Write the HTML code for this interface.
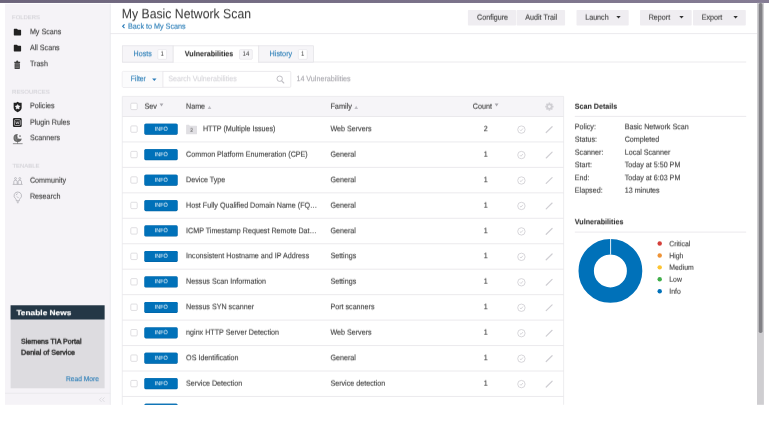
<!DOCTYPE html>
<html><head><meta charset="utf-8"><title>My Basic Network Scan</title>
<style>
html,body{margin:0;padding:0;background:#fff;overflow:hidden;width:769px;height:429px}
svg{display:block;font-family:"Liberation Sans",sans-serif;text-rendering:geometricPrecision}
.t{position:absolute;left:0;top:0;will-change:transform;transform-origin:0 0}
#pg{position:relative;width:769px;height:429px;overflow:hidden;background:#fff}
</style></head><body>
<div id="pg">
<svg width="769" height="429" viewBox="0 0 769 429">
<rect x="0.00" y="0.00" width="769.00" height="429.00" fill="#ffffff"/>
<defs><linearGradient id="tb" x1="0" y1="0" x2="1" y2="0"><stop offset="0" stop-color="#6c647b"/><stop offset="1" stop-color="#857c94"/></linearGradient></defs>
<rect x="0.00" y="0.00" width="769.00" height="2.90" fill="url(#tb)"/>
<rect x="0.00" y="2.00" width="769.00" height="0.90" fill="#2a2040" opacity=".13"/>
<rect x="5.00" y="3.80" width="105.60" height="401.00" fill="#f5f3f7"/>
<line x1="110.30" y1="3.80" x2="110.30" y2="404.80" stroke="#eae8ed" stroke-width="0.8"/>
<path d="M13.8 30.30 v-.9 q0-.6 .6-.6 h2.3 q.4 0 .6 .3 l.5 .7 h2.7 q.6 0 .6 .6 v4.4 q0 .6-.6 .6 h-6.1 q-.6 0-.6-.6z" fill="#222"/>
<path d="M13.8 46.30 v-.9 q0-.6 .6-.6 h2.3 q.4 0 .6 .3 l.5 .7 h2.7 q.6 0 .6 .6 v4.4 q0 .6-.6 .6 h-6.1 q-.6 0-.6-.6z" fill="#222"/>
<path d="M14.3 61.7 h1.8 q0-1.3 1.1-1.3 q1.1 0 1.1 1.3 h1.8 v1.2 h-5.8z M14.6 63.3 h5.2 v5.1 q0 .7-.7 .7 h-3.8 q-.7 0-.7-.7z" fill="#3d3d3d"/>
<path d="M15.3 64.8 h3.8 M15.3 66.2 h3.8 M15.3 67.6 h3.8" stroke="#f4f3f6" stroke-width=".4" opacity=".75"/>
<path d="M17.65 101.8 l1.5 1 h2.5 v4.9 q0 2.6-4 4.6 q-4-2-4-4.6 v-4.9 h2.5z" fill="#222"/>
<polygon points="17.65,104.50 18.50,105.83 20.03,106.23 19.03,107.45 19.12,109.02 17.65,108.45 16.18,109.02 16.27,107.45 15.27,106.23 16.80,105.83" fill="#f4f3f6" stroke="#f4f3f6" stroke-width=".5" stroke-linejoin="round"/>
<rect x="12.95" y="118.10" width="8.75" height="9.00" fill="#222" rx="1.3"/>
<rect x="14.4" y="119.7" width="5.9" height="5.8" rx=".9" stroke="#f4f3f6" stroke-width=".6" fill="none"/><path d="M15.7 121.3 l.8 2.7 .85-2.3 .85 2.3 .8-2.7" stroke="#f4f3f6" stroke-width=".55" fill="none"/>
<mask id="dm"><rect x="10" y="130" width="16" height="16" fill="#fff"/><circle cx="20.2" cy="135.9" r="2.9" fill="#000"/></mask><circle cx="17.6" cy="138.0" r="4.1" fill="#666" mask="url(#dm)"/><circle cx="20.0" cy="136.0" r=".85" fill="#666"/><path d="M17.6 141.8 v1.9 M12.9 143.7 h9.7" stroke="#666" stroke-width=".7"/><path d="M15.2 136.2 q-.6 2.6 1.6 4.4 M17 139 l1.6-1.6" stroke="#f4f3f6" stroke-width=".4" fill="none" opacity=".7"/>
<path d="M12.7 184.4 h9.9 M13.8 184.2 v-2.5 q0-1.5 1.7-1.5 q1.7 0 1.7 1.5 v2.5 M18.1 184.2 v-2.5 q0-1.5 1.7-1.5 q1.7 0 1.7 1.5 v2.5" stroke="#9b9aa1" stroke-width=".6" fill="none"/><circle cx="15.5" cy="178.5" r=".95" stroke="#9b9aa1" stroke-width=".55" fill="none"/><circle cx="19.8" cy="178.5" r=".95" stroke="#9b9aa1" stroke-width=".55" fill="none"/>
<path d="M17.8 192.0 a3.7 3.7 0 0 1 2.2 6.7 q-.6 .6-.6 1.5 v.5 h-3.2 v-.5 q0-.9-.6-1.5 a3.7 3.7 0 0 1 2.2-6.7z M16.7 201.9 h2.2 M17.2 202.8 h1.2 M16.1 195.2 q.3-1.3 1.6-1.5 M17 196.5 l1.6 1.6" stroke="#9b9aa1" stroke-width=".6" fill="none"/>
<rect x="10.60" y="305.30" width="94.00" height="83.00" fill="#dddce0"/>
<rect x="10.60" y="305.30" width="94.00" height="14.20" fill="#243746"/>
<line x1="5.00" y1="393.30" x2="110.20" y2="393.30" stroke="#e6e5e9" stroke-width="0.7"/>
<path d="M101.6 397.5 l-2.1 2.2 2.1 2.2 M104.5 397.5 l-2.1 2.2 2.1 2.2" stroke="#cfced3" stroke-width=".6" fill="none"/>
<path d="M124.5 24.4 l-1.8 1.9 1.8 1.9" stroke="#2b7cb8" stroke-width="1.2" fill="none"/>
<line x1="110.20" y1="33.60" x2="757.00" y2="33.60" stroke="#e6e5e8" stroke-width="0.8"/>
<rect x="467.90" y="9.90" width="48.20" height="15.70" fill="#efedf1" rx="0.8"/>
<rect x="516.60" y="9.90" width="48.50" height="15.70" fill="#efedf1" rx="0.8"/>
<rect x="576.50" y="9.90" width="52.20" height="15.70" fill="#efedf1" rx="0.8"/>
<path d="M616.30 16.1 h4.4 l-2.2 2.5z" fill="#333"/>
<rect x="640.00" y="9.90" width="51.70" height="15.70" fill="#efedf1" rx="0.8"/>
<path d="M679.30 16.1 h4.4 l-2.2 2.5z" fill="#333"/>
<rect x="693.00" y="9.90" width="52.80" height="15.70" fill="#efedf1" rx="0.8"/>
<path d="M733.40 16.1 h4.4 l-2.2 2.5z" fill="#333"/>
<line x1="122.20" y1="62.00" x2="746.20" y2="62.00" stroke="#e6e5e8" stroke-width="0.8"/>
<rect x="122.30" y="45.80" width="50.90" height="16.30" fill="#f6f5f8" stroke="#e2e1e5" stroke-width="0.7"/>
<rect x="258.60" y="45.80" width="54.80" height="16.30" fill="#f6f5f8" stroke="#e2e1e5" stroke-width="0.7"/>
<path d="M173.2 62.6 V45.8 H258.6 V62.6" fill="#fff" stroke="#e2e1e5" stroke-width=".7"/>
<rect x="157.80" y="49.60" width="8.80" height="9.70" fill="#fff" rx="1" stroke="#e2e1e5" stroke-width="0.6"/>
<rect x="239.50" y="49.60" width="12.80" height="9.70" fill="#f6f5f8" rx="1" stroke="#e2e1e5" stroke-width="0.6"/>
<rect x="298.40" y="49.60" width="8.80" height="9.70" fill="#fff" rx="1" stroke="#e2e1e5" stroke-width="0.6"/>
<rect x="122.30" y="71.40" width="168.50" height="15.90" fill="#fff" rx="1" stroke="#e2e1e5" stroke-width="0.7"/>
<rect x="122.60" y="71.70" width="40.20" height="15.30" fill="#fbfbfc"/>
<line x1="162.90" y1="71.40" x2="162.90" y2="87.30" stroke="#e2e1e5" stroke-width="0.7"/>
<path d="M152.1 78.6 h4.4 l-2.2 2.4z" fill="#2b7cb8"/>
<circle cx="279.7" cy="78.7" r="2.7" stroke="#bfbec4" stroke-width="1" fill="none"/><path d="M281.7 80.8 l2.1 2.2" stroke="#bfbec4" stroke-width="1.1" stroke-linecap="round"/>
<rect x="122.30" y="96.40" width="441.30" height="20.10" fill="#f6f5f8"/>
<path d="M122.3 404.8 V96.4 H563.6 V404.8" fill="none" stroke="#e6e5e9" stroke-width=".7"/>
<rect x="130.80" y="103.20" width="6.40" height="6.40" fill="#fff" rx="1" stroke="#d2d1d6" stroke-width="0.7"/>
<path d="M159.6 103.5 h3.8 l-1.9 3.1z" fill="#a9a8ae"/>
<path d="M207.7 108.9 h3.6 l-1.8-3.1z" fill="#bdbcc2"/>
<path d="M354.4 108.9 h3.6 l-1.8-3.1z" fill="#bdbcc2"/>
<path d="M494.7 103.5 h3.8 l-1.9 3.1z" fill="#a9a8ae"/>
<g stroke="#cfced3" fill="none"><circle cx="549.4" cy="106.6" r="2.3" stroke-width="1.7"/><line x1="552.00" y1="106.60" x2="553.50" y2="106.60" stroke-width="1.6"/><line x1="551.24" y1="108.44" x2="552.30" y2="109.50" stroke-width="1.6"/><line x1="549.40" y1="109.20" x2="549.40" y2="110.70" stroke-width="1.6"/><line x1="547.56" y1="108.44" x2="546.50" y2="109.50" stroke-width="1.6"/><line x1="546.80" y1="106.60" x2="545.30" y2="106.60" stroke-width="1.6"/><line x1="547.56" y1="104.76" x2="546.50" y2="103.70" stroke-width="1.6"/><line x1="549.40" y1="104.00" x2="549.40" y2="102.50" stroke-width="1.6"/><line x1="551.24" y1="104.76" x2="552.30" y2="103.70" stroke-width="1.6"/></g>
<clipPath id="cl"><rect x="0" y="0" width="757" height="404.8"/></clipPath><g clip-path="url(#cl)">
<line x1="122.30" y1="116.50" x2="563.60" y2="116.50" stroke="#e6e5e9" stroke-width="0.8"/>
<rect x="130.80" y="125.90" width="6.40" height="6.40" fill="#fff" rx="1" stroke="#d2d1d6" stroke-width="0.7"/>
<rect x="144.50" y="123.80" width="33.00" height="11.00" fill="#005f9f" rx="1.3"/>
<rect x="144.50" y="123.80" width="33.00" height="10.50" fill="#0071b9" rx="1.3"/>
<path d="M186.1 125.70 v-.5 q0-.4 .4-.4 h2.6 l.6 .9z M186.1 125.80 h10.4 q.5 0 .5 .5 v7.5 q0 .5-.5 .5 h-9.9 q-.5 0-.5-.5z" fill="#e0dfe3"/>
<circle cx="521.4" cy="129.60" r="3.7" stroke="#cbcacf" stroke-width=".75" fill="none"/><path d="M519.9 129.70 l1.1 1.1 1.9-2.3" stroke="#cbcacf" stroke-width=".75" fill="none"/>
<path d="M546.2 132.50 L552.1 126.70" stroke="#cfced3" stroke-width="1.2" stroke-linecap="round"/>
<line x1="122.30" y1="141.95" x2="563.60" y2="141.95" stroke="#e6e5e9" stroke-width="0.8"/>
<rect x="130.80" y="151.35" width="6.40" height="6.40" fill="#fff" rx="1" stroke="#d2d1d6" stroke-width="0.7"/>
<rect x="144.50" y="149.25" width="33.00" height="11.00" fill="#005f9f" rx="1.3"/>
<rect x="144.50" y="149.25" width="33.00" height="10.50" fill="#0071b9" rx="1.3"/>
<circle cx="521.4" cy="155.05" r="3.7" stroke="#cbcacf" stroke-width=".75" fill="none"/><path d="M519.9 155.15 l1.1 1.1 1.9-2.3" stroke="#cbcacf" stroke-width=".75" fill="none"/>
<path d="M546.2 157.95 L552.1 152.15" stroke="#cfced3" stroke-width="1.2" stroke-linecap="round"/>
<line x1="122.30" y1="167.40" x2="563.60" y2="167.40" stroke="#e6e5e9" stroke-width="0.8"/>
<rect x="130.80" y="176.80" width="6.40" height="6.40" fill="#fff" rx="1" stroke="#d2d1d6" stroke-width="0.7"/>
<rect x="144.50" y="174.70" width="33.00" height="11.00" fill="#005f9f" rx="1.3"/>
<rect x="144.50" y="174.70" width="33.00" height="10.50" fill="#0071b9" rx="1.3"/>
<circle cx="521.4" cy="180.50" r="3.7" stroke="#cbcacf" stroke-width=".75" fill="none"/><path d="M519.9 180.60 l1.1 1.1 1.9-2.3" stroke="#cbcacf" stroke-width=".75" fill="none"/>
<path d="M546.2 183.40 L552.1 177.60" stroke="#cfced3" stroke-width="1.2" stroke-linecap="round"/>
<line x1="122.30" y1="192.85" x2="563.60" y2="192.85" stroke="#e6e5e9" stroke-width="0.8"/>
<rect x="130.80" y="202.25" width="6.40" height="6.40" fill="#fff" rx="1" stroke="#d2d1d6" stroke-width="0.7"/>
<rect x="144.50" y="200.15" width="33.00" height="11.00" fill="#005f9f" rx="1.3"/>
<rect x="144.50" y="200.15" width="33.00" height="10.50" fill="#0071b9" rx="1.3"/>
<circle cx="521.4" cy="205.95" r="3.7" stroke="#cbcacf" stroke-width=".75" fill="none"/><path d="M519.9 206.05 l1.1 1.1 1.9-2.3" stroke="#cbcacf" stroke-width=".75" fill="none"/>
<path d="M546.2 208.85 L552.1 203.05" stroke="#cfced3" stroke-width="1.2" stroke-linecap="round"/>
<line x1="122.30" y1="218.30" x2="563.60" y2="218.30" stroke="#e6e5e9" stroke-width="0.8"/>
<rect x="130.80" y="227.70" width="6.40" height="6.40" fill="#fff" rx="1" stroke="#d2d1d6" stroke-width="0.7"/>
<rect x="144.50" y="225.60" width="33.00" height="11.00" fill="#005f9f" rx="1.3"/>
<rect x="144.50" y="225.60" width="33.00" height="10.50" fill="#0071b9" rx="1.3"/>
<circle cx="521.4" cy="231.40" r="3.7" stroke="#cbcacf" stroke-width=".75" fill="none"/><path d="M519.9 231.50 l1.1 1.1 1.9-2.3" stroke="#cbcacf" stroke-width=".75" fill="none"/>
<path d="M546.2 234.30 L552.1 228.50" stroke="#cfced3" stroke-width="1.2" stroke-linecap="round"/>
<line x1="122.30" y1="243.75" x2="563.60" y2="243.75" stroke="#e6e5e9" stroke-width="0.8"/>
<rect x="130.80" y="253.15" width="6.40" height="6.40" fill="#fff" rx="1" stroke="#d2d1d6" stroke-width="0.7"/>
<rect x="144.50" y="251.05" width="33.00" height="11.00" fill="#005f9f" rx="1.3"/>
<rect x="144.50" y="251.05" width="33.00" height="10.50" fill="#0071b9" rx="1.3"/>
<circle cx="521.4" cy="256.85" r="3.7" stroke="#cbcacf" stroke-width=".75" fill="none"/><path d="M519.9 256.95 l1.1 1.1 1.9-2.3" stroke="#cbcacf" stroke-width=".75" fill="none"/>
<path d="M546.2 259.75 L552.1 253.95" stroke="#cfced3" stroke-width="1.2" stroke-linecap="round"/>
<line x1="122.30" y1="269.20" x2="563.60" y2="269.20" stroke="#e6e5e9" stroke-width="0.8"/>
<rect x="130.80" y="278.60" width="6.40" height="6.40" fill="#fff" rx="1" stroke="#d2d1d6" stroke-width="0.7"/>
<rect x="144.50" y="276.50" width="33.00" height="11.00" fill="#005f9f" rx="1.3"/>
<rect x="144.50" y="276.50" width="33.00" height="10.50" fill="#0071b9" rx="1.3"/>
<circle cx="521.4" cy="282.30" r="3.7" stroke="#cbcacf" stroke-width=".75" fill="none"/><path d="M519.9 282.40 l1.1 1.1 1.9-2.3" stroke="#cbcacf" stroke-width=".75" fill="none"/>
<path d="M546.2 285.20 L552.1 279.40" stroke="#cfced3" stroke-width="1.2" stroke-linecap="round"/>
<line x1="122.30" y1="294.65" x2="563.60" y2="294.65" stroke="#e6e5e9" stroke-width="0.8"/>
<rect x="130.80" y="304.05" width="6.40" height="6.40" fill="#fff" rx="1" stroke="#d2d1d6" stroke-width="0.7"/>
<rect x="144.50" y="301.95" width="33.00" height="11.00" fill="#005f9f" rx="1.3"/>
<rect x="144.50" y="301.95" width="33.00" height="10.50" fill="#0071b9" rx="1.3"/>
<circle cx="521.4" cy="307.75" r="3.7" stroke="#cbcacf" stroke-width=".75" fill="none"/><path d="M519.9 307.85 l1.1 1.1 1.9-2.3" stroke="#cbcacf" stroke-width=".75" fill="none"/>
<path d="M546.2 310.65 L552.1 304.85" stroke="#cfced3" stroke-width="1.2" stroke-linecap="round"/>
<line x1="122.30" y1="320.10" x2="563.60" y2="320.10" stroke="#e6e5e9" stroke-width="0.8"/>
<rect x="130.80" y="329.50" width="6.40" height="6.40" fill="#fff" rx="1" stroke="#d2d1d6" stroke-width="0.7"/>
<rect x="144.50" y="327.40" width="33.00" height="11.00" fill="#005f9f" rx="1.3"/>
<rect x="144.50" y="327.40" width="33.00" height="10.50" fill="#0071b9" rx="1.3"/>
<circle cx="521.4" cy="333.20" r="3.7" stroke="#cbcacf" stroke-width=".75" fill="none"/><path d="M519.9 333.30 l1.1 1.1 1.9-2.3" stroke="#cbcacf" stroke-width=".75" fill="none"/>
<path d="M546.2 336.10 L552.1 330.30" stroke="#cfced3" stroke-width="1.2" stroke-linecap="round"/>
<line x1="122.30" y1="345.55" x2="563.60" y2="345.55" stroke="#e6e5e9" stroke-width="0.8"/>
<rect x="130.80" y="354.95" width="6.40" height="6.40" fill="#fff" rx="1" stroke="#d2d1d6" stroke-width="0.7"/>
<rect x="144.50" y="352.85" width="33.00" height="11.00" fill="#005f9f" rx="1.3"/>
<rect x="144.50" y="352.85" width="33.00" height="10.50" fill="#0071b9" rx="1.3"/>
<circle cx="521.4" cy="358.65" r="3.7" stroke="#cbcacf" stroke-width=".75" fill="none"/><path d="M519.9 358.75 l1.1 1.1 1.9-2.3" stroke="#cbcacf" stroke-width=".75" fill="none"/>
<path d="M546.2 361.55 L552.1 355.75" stroke="#cfced3" stroke-width="1.2" stroke-linecap="round"/>
<line x1="122.30" y1="371.00" x2="563.60" y2="371.00" stroke="#e6e5e9" stroke-width="0.8"/>
<rect x="130.80" y="380.40" width="6.40" height="6.40" fill="#fff" rx="1" stroke="#d2d1d6" stroke-width="0.7"/>
<rect x="144.50" y="378.30" width="33.00" height="11.00" fill="#005f9f" rx="1.3"/>
<rect x="144.50" y="378.30" width="33.00" height="10.50" fill="#0071b9" rx="1.3"/>
<circle cx="521.4" cy="384.10" r="3.7" stroke="#cbcacf" stroke-width=".75" fill="none"/><path d="M519.9 384.20 l1.1 1.1 1.9-2.3" stroke="#cbcacf" stroke-width=".75" fill="none"/>
<path d="M546.2 387.00 L552.1 381.20" stroke="#cfced3" stroke-width="1.2" stroke-linecap="round"/>
<line x1="122.30" y1="396.45" x2="563.60" y2="396.45" stroke="#e6e5e9" stroke-width="0.8"/>
<rect x="144.50" y="403.75" width="33.00" height="11.00" fill="#005f9f" rx="1.3"/>
<rect x="144.50" y="403.75" width="33.00" height="10.50" fill="#0071b9" rx="1.3"/>
</g>
<line x1="574.80" y1="116.40" x2="746.20" y2="116.40" stroke="#e6e5e8" stroke-width="0.8"/>
<line x1="574.80" y1="232.10" x2="746.20" y2="232.10" stroke="#e6e5e8" stroke-width="0.8"/>
<circle cx="610.4" cy="270.9" r="24.2" fill="none" stroke="#0071b9" stroke-width="15.4"/>
<line x1="610.60" y1="238.60" x2="610.60" y2="254.60" stroke="#fff" stroke-width="0.9"/>
<circle cx="659.7" cy="243.50" r="2.2" fill="#d43f3a"/>
<circle cx="659.7" cy="255.43" r="2.2" fill="#ee9336"/>
<circle cx="659.7" cy="267.36" r="2.2" fill="#fdc431"/>
<circle cx="659.7" cy="279.29" r="2.2" fill="#3fae49"/>
<circle cx="659.7" cy="291.22" r="2.2" fill="#0071b9"/>
<rect x="757.00" y="2.90" width="6.90" height="401.90" fill="#cfced1"/>
<rect x="758.70" y="2.90" width="3.80" height="330.20" fill="#828186" rx="1.8"/>
</svg>
<svg class="t" style="transform:translateY(.25px) rotate(.004deg)" width="769" height="429" viewBox="0 0 769 429">
<text x="12.10" y="19.00" font-size="5.8" fill="#d3d2d7" textLength="27.80" lengthAdjust="spacingAndGlyphs" stroke="#d3d2d7" stroke-width="0.12">FOLDERS</text>
<text x="29.90" y="34.00" font-size="7.8" fill="#3e3e3e" textLength="31.40" lengthAdjust="spacingAndGlyphs" stroke="#3e3e3e" stroke-width="0.12">My Scans</text>
<text x="29.90" y="50.00" font-size="7.8" fill="#3e3e3e" textLength="29.82" lengthAdjust="spacingAndGlyphs" stroke="#3e3e3e" stroke-width="0.12">All Scans</text>
<text x="29.90" y="66.00" font-size="7.8" fill="#3e3e3e" textLength="18.02" lengthAdjust="spacingAndGlyphs" stroke="#3e3e3e" stroke-width="0.12">Trash</text>
<text x="29.90" y="108.00" font-size="7.8" fill="#3e3e3e" textLength="24.65" lengthAdjust="spacingAndGlyphs" stroke="#3e3e3e" stroke-width="0.12">Policies</text>
<text x="29.90" y="140.00" font-size="7.8" fill="#3e3e3e" textLength="30.22" lengthAdjust="spacingAndGlyphs" stroke="#3e3e3e" stroke-width="0.12">Scanners</text>
<text x="16.40" y="315.00" font-size="7.4" fill="#ffffff" textLength="55.00" lengthAdjust="spacingAndGlyphs" stroke="#ffffff" stroke-width="0.15" font-weight="bold">Tenable News</text>
<text x="66.00" y="381.00" font-size="7.2" fill="#2b7eb7" textLength="33.00" lengthAdjust="spacingAndGlyphs" stroke="#2b7eb7" stroke-width="0.12">Read More</text>
<text x="121.80" y="18.00" font-size="13.4" fill="#333" textLength="129.20" lengthAdjust="spacingAndGlyphs">My Basic Network Scan</text>
<text x="133.60" y="56.00" font-size="7.8" fill="#2b7eb7" textLength="18.10" lengthAdjust="spacingAndGlyphs" stroke="#2b7eb7" stroke-width="0.12">Hosts</text>
<text x="184.80" y="56.00" font-size="7.6" fill="#333" textLength="48.50" lengthAdjust="spacingAndGlyphs" stroke="#333" stroke-width="0.1" font-weight="bold">Vulnerabilities</text>
<text x="269.60" y="56.00" font-size="7.8" fill="#2b7eb7" textLength="22.60" lengthAdjust="spacingAndGlyphs" stroke="#2b7eb7" stroke-width="0.12">History</text>
<text x="130.70" y="81.00" font-size="7.8" fill="#2b7eb7" textLength="15.20" lengthAdjust="spacingAndGlyphs" stroke="#2b7eb7" stroke-width="0.12">Filter</text>
<text x="168.30" y="81.00" font-size="7.8" fill="#d6d5da" textLength="68.40" lengthAdjust="spacingAndGlyphs" stroke="#d6d5da" stroke-width="0.12">Search Vulnerabilities</text>
<text x="296.40" y="81.00" font-size="7.8" fill="#a9a8ae" textLength="54.30" lengthAdjust="spacingAndGlyphs" stroke="#a9a8ae" stroke-width="0.12">14 Vulnerabilities</text>
<text x="202.90" y="131.00" font-size="7.8" fill="#3e3e3e" textLength="72.60" lengthAdjust="spacingAndGlyphs" stroke="#3e3e3e" stroke-width="0.12">HTTP (Multiple Issues)</text>
<text x="330.40" y="131.00" font-size="7.8" fill="#3e3e3e" textLength="41.21" lengthAdjust="spacingAndGlyphs" stroke="#3e3e3e" stroke-width="0.12">Web Servers</text>
<text x="483.71" y="131.00" font-size="7.8" fill="#3e3e3e" textLength="3.98" lengthAdjust="spacingAndGlyphs" stroke="#3e3e3e" stroke-width="0.12">2</text>
<text x="154.70" y="156.00" font-size="6.0" fill="#fff" textLength="13.00" lengthAdjust="spacingAndGlyphs">INFO</text>
<text x="186.10" y="182.00" font-size="7.8" fill="#3e3e3e" textLength="39.23" lengthAdjust="spacingAndGlyphs" stroke="#3e3e3e" stroke-width="0.12">Device Type</text>
<text x="330.40" y="182.00" font-size="7.8" fill="#3e3e3e" textLength="25.45" lengthAdjust="spacingAndGlyphs" stroke="#3e3e3e" stroke-width="0.12">General</text>
<text x="483.71" y="182.00" font-size="7.8" fill="#3e3e3e" textLength="3.98" lengthAdjust="spacingAndGlyphs" stroke="#3e3e3e" stroke-width="0.12">1</text>
<text x="154.70" y="232.00" font-size="6.0" fill="#fff" textLength="13.00" lengthAdjust="spacingAndGlyphs">INFO</text>
<text x="186.10" y="233.00" font-size="7.8" fill="#3e3e3e" textLength="130.65" lengthAdjust="spacingAndGlyphs" stroke="#3e3e3e" stroke-width="0.12">ICMP Timestamp Request Remote Dat…</text>
<text x="330.40" y="233.00" font-size="7.8" fill="#3e3e3e" textLength="25.45" lengthAdjust="spacingAndGlyphs" stroke="#3e3e3e" stroke-width="0.12">General</text>
<text x="483.71" y="233.00" font-size="7.8" fill="#3e3e3e" textLength="3.98" lengthAdjust="spacingAndGlyphs" stroke="#3e3e3e" stroke-width="0.12">1</text>
<text x="186.10" y="258.00" font-size="7.8" fill="#3e3e3e" textLength="123.12" lengthAdjust="spacingAndGlyphs" stroke="#3e3e3e" stroke-width="0.12">Inconsistent Hostname and IP Address</text>
<text x="330.40" y="258.00" font-size="7.8" fill="#3e3e3e" textLength="25.84" lengthAdjust="spacingAndGlyphs" stroke="#3e3e3e" stroke-width="0.12">Settings</text>
<text x="483.71" y="258.00" font-size="7.8" fill="#3e3e3e" textLength="3.98" lengthAdjust="spacingAndGlyphs" stroke="#3e3e3e" stroke-width="0.12">1</text>
<text x="154.70" y="283.00" font-size="6.0" fill="#fff" textLength="13.00" lengthAdjust="spacingAndGlyphs">INFO</text>
<text x="186.10" y="309.00" font-size="7.8" fill="#3e3e3e" textLength="67.98" lengthAdjust="spacingAndGlyphs" stroke="#3e3e3e" stroke-width="0.12">Nessus SYN scanner</text>
<text x="330.40" y="309.00" font-size="7.8" fill="#3e3e3e" textLength="44.13" lengthAdjust="spacingAndGlyphs" stroke="#3e3e3e" stroke-width="0.12">Port scanners</text>
<text x="483.71" y="309.00" font-size="7.8" fill="#3e3e3e" textLength="3.98" lengthAdjust="spacingAndGlyphs" stroke="#3e3e3e" stroke-width="0.12">1</text>
<text x="154.70" y="334.00" font-size="6.0" fill="#fff" textLength="13.00" lengthAdjust="spacingAndGlyphs">INFO</text>
<text x="186.10" y="360.00" font-size="7.8" fill="#3e3e3e" textLength="52.48" lengthAdjust="spacingAndGlyphs" stroke="#3e3e3e" stroke-width="0.12">OS Identification</text>
<text x="330.40" y="360.00" font-size="7.8" fill="#3e3e3e" textLength="25.45" lengthAdjust="spacingAndGlyphs" stroke="#3e3e3e" stroke-width="0.12">General</text>
<text x="483.71" y="360.00" font-size="7.8" fill="#3e3e3e" textLength="3.98" lengthAdjust="spacingAndGlyphs" stroke="#3e3e3e" stroke-width="0.12">1</text>
<text x="154.70" y="385.00" font-size="6.0" fill="#fff" textLength="13.00" lengthAdjust="spacingAndGlyphs">INFO</text>
<text x="574.80" y="129.00" font-size="7.8" fill="#3e3e3e" textLength="21.07" lengthAdjust="spacingAndGlyphs" stroke="#3e3e3e" stroke-width="0.12">Policy:</text>
<text x="624.70" y="129.00" font-size="7.8" fill="#3e3e3e" textLength="64.00" lengthAdjust="spacingAndGlyphs" stroke="#3e3e3e" stroke-width="0.12">Basic Network Scan</text>
<text x="574.80" y="167.00" font-size="7.8" fill="#3e3e3e" textLength="17.09" lengthAdjust="spacingAndGlyphs" stroke="#3e3e3e" stroke-width="0.12">Start:</text>
<text x="624.70" y="167.00" font-size="7.8" fill="#3e3e3e" textLength="55.66" lengthAdjust="spacingAndGlyphs" stroke="#3e3e3e" stroke-width="0.12">Today at 5:50 PM</text>
<text x="574.80" y="180.00" font-size="7.8" fill="#3e3e3e" textLength="14.71" lengthAdjust="spacingAndGlyphs" stroke="#3e3e3e" stroke-width="0.12">End:</text>
<text x="624.70" y="180.00" font-size="7.8" fill="#3e3e3e" textLength="55.66" lengthAdjust="spacingAndGlyphs" stroke="#3e3e3e" stroke-width="0.12">Today at 6:03 PM</text>
<text x="574.80" y="224.00" font-size="7.6" fill="#333" textLength="48.60" lengthAdjust="spacingAndGlyphs" stroke="#333" stroke-width="0.1" font-weight="bold">Vulnerabilities</text>
<text x="669.30" y="246.00" font-size="7.5" fill="#3e3e3e" textLength="21.02" lengthAdjust="spacingAndGlyphs" stroke="#3e3e3e" stroke-width="0.12">Critical</text>
<text x="669.30" y="258.00" font-size="7.5" fill="#3e3e3e" textLength="14.14" lengthAdjust="spacingAndGlyphs" stroke="#3e3e3e" stroke-width="0.12">High</text>
</svg>
<svg class="t" style="transform:translateY(.75px) rotate(.004deg)" width="769" height="429" viewBox="0 0 769 429">
<text x="12.10" y="93.00" font-size="5.8" fill="#d3d2d7" textLength="37.70" lengthAdjust="spacingAndGlyphs" stroke="#d3d2d7" stroke-width="0.12">RESOURCES</text>
<text x="12.40" y="167.00" font-size="5.8" fill="#d3d2d7" textLength="27.10" lengthAdjust="spacingAndGlyphs" stroke="#d3d2d7" stroke-width="0.12">TENABLE</text>
<text x="29.90" y="124.00" font-size="7.8" fill="#3e3e3e" textLength="40.16" lengthAdjust="spacingAndGlyphs" stroke="#3e3e3e" stroke-width="0.12">Plugin Rules</text>
<text x="29.90" y="182.00" font-size="7.8" fill="#3e3e3e" textLength="36.17" lengthAdjust="spacingAndGlyphs" stroke="#3e3e3e" stroke-width="0.12">Community</text>
<text x="29.90" y="198.00" font-size="7.8" fill="#3e3e3e" textLength="30.61" lengthAdjust="spacingAndGlyphs" stroke="#3e3e3e" stroke-width="0.12">Research</text>
<text x="21.00" y="343.00" font-size="7.2" fill="#2e2e2e" textLength="60.50" lengthAdjust="spacingAndGlyphs" stroke="#2e2e2e" stroke-width="0.42">Siemens TIA Portal</text>
<text x="21.00" y="354.00" font-size="7.2" fill="#2e2e2e" textLength="54.00" lengthAdjust="spacingAndGlyphs" stroke="#2e2e2e" stroke-width="0.42">Denial of Service</text>
<text x="128.00" y="28.00" font-size="7.8" fill="#2b7eb7" textLength="57.60" lengthAdjust="spacingAndGlyphs" stroke="#2b7eb7" stroke-width="0.12">Back to My Scans</text>
<text x="477.10" y="19.00" font-size="7.8" fill="#3e3e3e" textLength="31.01" lengthAdjust="spacingAndGlyphs" stroke="#3e3e3e" stroke-width="0.12">Configure</text>
<text x="525.30" y="19.00" font-size="7.8" fill="#3e3e3e" textLength="31.80" lengthAdjust="spacingAndGlyphs" stroke="#3e3e3e" stroke-width="0.12">Audit Trail</text>
<text x="585.20" y="19.00" font-size="7.8" fill="#3e3e3e" textLength="23.47" lengthAdjust="spacingAndGlyphs" stroke="#3e3e3e" stroke-width="0.12">Launch</text>
<text x="648.70" y="19.00" font-size="7.8" fill="#3e3e3e" textLength="21.47" lengthAdjust="spacingAndGlyphs" stroke="#3e3e3e" stroke-width="0.12">Report</text>
<text x="701.70" y="19.00" font-size="7.8" fill="#3e3e3e" textLength="20.67" lengthAdjust="spacingAndGlyphs" stroke="#3e3e3e" stroke-width="0.12">Export</text>
<text x="160.52" y="55.00" font-size="6.6" fill="#3a3a3a" textLength="3.37" lengthAdjust="spacingAndGlyphs">1</text>
<text x="242.53" y="55.00" font-size="6.6" fill="#3a3a3a" textLength="6.73" lengthAdjust="spacingAndGlyphs">14</text>
<text x="301.12" y="55.00" font-size="6.6" fill="#3a3a3a" textLength="3.37" lengthAdjust="spacingAndGlyphs">1</text>
<text x="144.50" y="108.00" font-size="7.8" fill="#3e3e3e" textLength="12.40" lengthAdjust="spacingAndGlyphs" stroke="#3e3e3e" stroke-width="0.12">Sev</text>
<text x="186.10" y="108.00" font-size="7.8" fill="#3e3e3e" textLength="19.00" lengthAdjust="spacingAndGlyphs" stroke="#3e3e3e" stroke-width="0.12">Name</text>
<text x="330.40" y="108.00" font-size="7.8" fill="#3e3e3e" textLength="21.60" lengthAdjust="spacingAndGlyphs" stroke="#3e3e3e" stroke-width="0.12">Family</text>
<text x="472.80" y="108.00" font-size="7.8" fill="#3e3e3e" textLength="19.10" lengthAdjust="spacingAndGlyphs" stroke="#3e3e3e" stroke-width="0.12">Count</text>
<text x="154.70" y="130.00" font-size="6.0" fill="#fff" textLength="13.00" lengthAdjust="spacingAndGlyphs">INFO</text>
<text x="190.27" y="131.00" font-size="5.2" fill="#666" textLength="2.65" lengthAdjust="spacingAndGlyphs" stroke="#666" stroke-width="0.12">2</text>
<text x="186.10" y="156.00" font-size="7.8" fill="#3e3e3e" textLength="121.63" lengthAdjust="spacingAndGlyphs" stroke="#3e3e3e" stroke-width="0.12">Common Platform Enumeration (CPE)</text>
<text x="330.40" y="156.00" font-size="7.8" fill="#3e3e3e" textLength="25.45" lengthAdjust="spacingAndGlyphs" stroke="#3e3e3e" stroke-width="0.12">General</text>
<text x="483.71" y="156.00" font-size="7.8" fill="#3e3e3e" textLength="3.98" lengthAdjust="spacingAndGlyphs" stroke="#3e3e3e" stroke-width="0.12">1</text>
<text x="154.70" y="181.00" font-size="6.0" fill="#fff" textLength="13.00" lengthAdjust="spacingAndGlyphs">INFO</text>
<text x="154.70" y="206.00" font-size="6.0" fill="#fff" textLength="13.00" lengthAdjust="spacingAndGlyphs">INFO</text>
<text x="186.10" y="207.00" font-size="7.8" fill="#3e3e3e" textLength="131.17" lengthAdjust="spacingAndGlyphs" stroke="#3e3e3e" stroke-width="0.12">Host Fully Qualified Domain Name (FQ…</text>
<text x="330.40" y="207.00" font-size="7.8" fill="#3e3e3e" textLength="25.45" lengthAdjust="spacingAndGlyphs" stroke="#3e3e3e" stroke-width="0.12">General</text>
<text x="483.71" y="207.00" font-size="7.8" fill="#3e3e3e" textLength="3.98" lengthAdjust="spacingAndGlyphs" stroke="#3e3e3e" stroke-width="0.12">1</text>
<text x="154.70" y="257.00" font-size="6.0" fill="#fff" textLength="13.00" lengthAdjust="spacingAndGlyphs">INFO</text>
<text x="186.10" y="283.00" font-size="7.8" fill="#3e3e3e" textLength="79.91" lengthAdjust="spacingAndGlyphs" stroke="#3e3e3e" stroke-width="0.12">Nessus Scan Information</text>
<text x="330.40" y="283.00" font-size="7.8" fill="#3e3e3e" textLength="25.84" lengthAdjust="spacingAndGlyphs" stroke="#3e3e3e" stroke-width="0.12">Settings</text>
<text x="483.71" y="283.00" font-size="7.8" fill="#3e3e3e" textLength="3.98" lengthAdjust="spacingAndGlyphs" stroke="#3e3e3e" stroke-width="0.12">1</text>
<text x="154.70" y="308.00" font-size="6.0" fill="#fff" textLength="13.00" lengthAdjust="spacingAndGlyphs">INFO</text>
<text x="186.10" y="334.00" font-size="7.8" fill="#3e3e3e" textLength="92.89" lengthAdjust="spacingAndGlyphs" stroke="#3e3e3e" stroke-width="0.12">nginx HTTP Server Detection</text>
<text x="330.40" y="334.00" font-size="7.8" fill="#3e3e3e" textLength="41.21" lengthAdjust="spacingAndGlyphs" stroke="#3e3e3e" stroke-width="0.12">Web Servers</text>
<text x="483.71" y="334.00" font-size="7.8" fill="#3e3e3e" textLength="3.98" lengthAdjust="spacingAndGlyphs" stroke="#3e3e3e" stroke-width="0.12">1</text>
<text x="154.70" y="359.00" font-size="6.0" fill="#fff" textLength="13.00" lengthAdjust="spacingAndGlyphs">INFO</text>
<text x="186.10" y="385.00" font-size="7.8" fill="#3e3e3e" textLength="56.05" lengthAdjust="spacingAndGlyphs" stroke="#3e3e3e" stroke-width="0.12">Service Detection</text>
<text x="330.40" y="385.00" font-size="7.8" fill="#3e3e3e" textLength="54.87" lengthAdjust="spacingAndGlyphs" stroke="#3e3e3e" stroke-width="0.12">Service detection</text>
<text x="483.71" y="385.00" font-size="7.8" fill="#3e3e3e" textLength="3.98" lengthAdjust="spacingAndGlyphs" stroke="#3e3e3e" stroke-width="0.12">1</text>
<text x="574.80" y="108.00" font-size="7.6" fill="#333" textLength="42.50" lengthAdjust="spacingAndGlyphs" stroke="#333" stroke-width="0.1" font-weight="bold">Scan Details</text>
<text x="574.80" y="141.00" font-size="7.8" fill="#3e3e3e" textLength="22.26" lengthAdjust="spacingAndGlyphs" stroke="#3e3e3e" stroke-width="0.12">Status:</text>
<text x="624.70" y="141.00" font-size="7.8" fill="#3e3e3e" textLength="34.59" lengthAdjust="spacingAndGlyphs" stroke="#3e3e3e" stroke-width="0.12">Completed</text>
<text x="574.80" y="154.00" font-size="7.8" fill="#3e3e3e" textLength="28.63" lengthAdjust="spacingAndGlyphs" stroke="#3e3e3e" stroke-width="0.12">Scanner:</text>
<text x="624.70" y="154.00" font-size="7.8" fill="#3e3e3e" textLength="45.73" lengthAdjust="spacingAndGlyphs" stroke="#3e3e3e" stroke-width="0.12">Local Scanner</text>
<text x="574.80" y="192.00" font-size="7.8" fill="#3e3e3e" textLength="27.84" lengthAdjust="spacingAndGlyphs" stroke="#3e3e3e" stroke-width="0.12">Elapsed:</text>
<text x="624.70" y="192.00" font-size="7.8" fill="#3e3e3e" textLength="34.99" lengthAdjust="spacingAndGlyphs" stroke="#3e3e3e" stroke-width="0.12">13 minutes</text>
<text x="669.30" y="269.00" font-size="7.5" fill="#3e3e3e" textLength="24.46" lengthAdjust="spacingAndGlyphs" stroke="#3e3e3e" stroke-width="0.12">Medium</text>
<text x="669.30" y="281.00" font-size="7.5" fill="#3e3e3e" textLength="12.62" lengthAdjust="spacingAndGlyphs" stroke="#3e3e3e" stroke-width="0.12">Low</text>
<text x="669.30" y="293.00" font-size="7.5" fill="#3e3e3e" textLength="11.47" lengthAdjust="spacingAndGlyphs" stroke="#3e3e3e" stroke-width="0.12">Info</text>
</svg>
</div>
</body></html>
